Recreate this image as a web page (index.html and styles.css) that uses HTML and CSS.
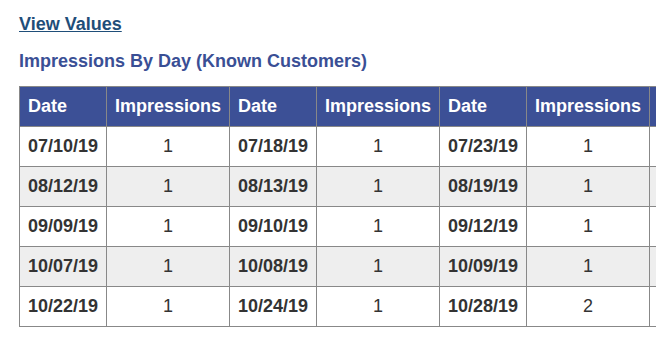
FILE: index.html
```html
<!DOCTYPE html>
<html>
<head>
<meta charset="utf-8">
<link rel="stylesheet" href="styles.css">
</head>
<body>
<div class="page">
  <a class="view-link" href="#">View Values</a>
  <h2 class="title">Impressions By Day (Known Customers)</h2>
  <table class="grid">
    <colgroup>
      <col class="c-date"><col class="c-imp">
      <col class="c-date"><col class="c-imp">
      <col class="c-date"><col class="c-imp">
      <col class="c-date">
    </colgroup>
    <thead>
      <tr><th>Date</th><th>Impressions</th><th>Date</th><th>Impressions</th><th>Date</th><th>Impressions</th><th></th></tr>
    </thead>
    <tbody>
      <tr><td class="d">07/10/19</td><td class="n">1</td><td class="d">07/18/19</td><td class="n">1</td><td class="d">07/23/19</td><td class="n">1</td><td class="d"></td></tr>
      <tr><td class="d">08/12/19</td><td class="n">1</td><td class="d">08/13/19</td><td class="n">1</td><td class="d">08/19/19</td><td class="n">1</td><td class="d"></td></tr>
      <tr><td class="d">09/09/19</td><td class="n">1</td><td class="d">09/10/19</td><td class="n">1</td><td class="d">09/12/19</td><td class="n">1</td><td class="d"></td></tr>
      <tr><td class="d">10/07/19</td><td class="n">1</td><td class="d">10/08/19</td><td class="n">1</td><td class="d">10/09/19</td><td class="n">1</td><td class="d"></td></tr>
      <tr><td class="d">10/22/19</td><td class="n">1</td><td class="d">10/24/19</td><td class="n">1</td><td class="d">10/28/19</td><td class="n">2</td><td class="d"></td></tr>
    </tbody>
  </table>
</div>
</body>
</html>
```

FILE: styles.css
```css
html, body {
  margin: 0;
  padding: 0;
  overflow: hidden;
  background: #ffffff;
}
body {
  font-family: "Liberation Sans", Arial, sans-serif;
  font-size: 18px;
  color: #333333;
}
.page {
  padding: 13px 0 0 19px;
}
.view-link {
  display: inline-block;
  font-weight: bold;
  font-size: 18px;
  line-height: 22px;
  color: #1f4e79;
  text-decoration: underline;
}
.title {
  margin: 15px 0 14px 0;
  font-size: 18px;
  line-height: 22px;
  font-weight: bold;
  color: #3a4f95;
}
.grid {
  border-collapse: collapse;
  table-layout: fixed;
  width: 718px;
}
.c-date { width: 87px; }
.c-imp { width: 123px; }
.grid th, .grid td {
  border: 1px solid #888888;
  height: 40px;
  padding: 0 8px;
  box-sizing: border-box;
  white-space: nowrap;
  overflow: hidden;
}
.grid th {
  background: #3c5096;
  color: #ffffff;
  font-weight: bold;
  text-align: left;
}
.grid td.d {
  font-weight: bold;
  text-align: left;
}
.grid td.n {
  text-align: center;
}
.grid tbody tr:nth-child(even) td {
  background: #eeeeee;
}
```
